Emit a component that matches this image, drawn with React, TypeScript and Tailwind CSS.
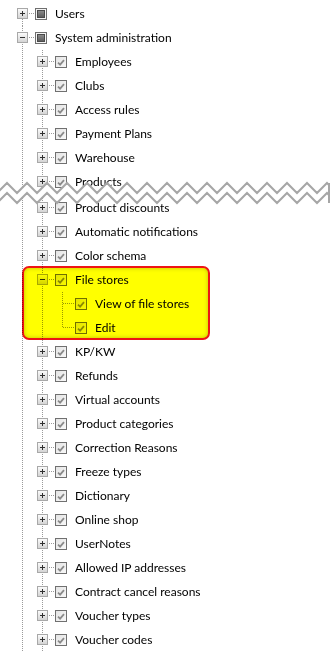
import React from 'react';

type Node = {
  label: string;
  depth: number;
  guides: boolean[];
  expander: 'plus' | 'minus' | null;
  mixed?: boolean;
  first?: boolean;
  last?: boolean;
};

const LINE = '#9a9a9a';

const level2 = [
  'Employees',
  'Clubs',
  'Access rules',
  'Payment Plans',
  'Warehouse',
  'Products',
  'Product discounts',
  'Automatic notifications',
  'Color schema',
  'File stores',
  'KP/KW',
  'Refunds',
  'Virtual accounts',
  'Product categories',
  'Correction Reasons',
  'Freeze types',
  'Dictionary',
  'Online shop',
  'UserNotes',
  'Allowed IP addresses',
  'Contract cancel reasons',
  'Voucher types',
  'Voucher codes',
];

const Guide = ({ on }: { on: boolean }) => (
  <svg width="20" height="24" className="shrink-0" shapeRendering="crispEdges">
    {on && <line x1="9.5" y1="0" x2="9.5" y2="24" stroke={LINE} strokeDasharray="1 1" />}
  </svg>
);

const Connector = ({ node }: { node: Node }) => (
  <svg width="22" height="24" className="shrink-0" shapeRendering="crispEdges">
    <defs>
      <linearGradient id="exp" x1="0" y1="0" x2="0" y2="1">
        <stop offset="0" stopColor="#fdfdfd" />
        <stop offset="1" stopColor="#d2d2d2" />
      </linearGradient>
    </defs>
    <line
      x1="9.5"
      y1={node.first ? 11 : 0}
      x2="9.5"
      y2={node.last ? 12 : 24}
      stroke={LINE}
      strokeDasharray="1 1"
    />
    <line x1="10" y1="11.5" x2="22" y2="11.5" stroke={LINE} strokeDasharray="1 1" />
    {node.expander && (
      <g>
        <rect x="4.5" y="6.5" width="10" height="10" fill="url(#exp)" stroke="#a8a8a8" />
        <rect x="7" y="11" width="5" height="1" fill="#303030" />
        {node.expander === 'plus' && <rect x="9" y="9" width="1" height="5" fill="#303030" />}
      </g>
    )}
  </svg>
);

const Check = ({ mixed }: { mixed?: boolean }) =>
  mixed ? (
    <div className="w-3 h-3 shrink-0 border border-[#6f6f6f] bg-[#f4f4f4] p-[1px]">
      <div className="w-full h-full border border-[#4a4a4a] bg-gradient-to-b from-[#8a8a8a] to-[#5e5e5e]" />
    </div>
  ) : (
    <div className="w-3 h-3 shrink-0 border border-[#707070] bg-gradient-to-br from-[#e4e4e4] to-[#f8f8f8] flex items-center justify-center">
      <svg width="8" height="7" viewBox="0 0 8 7">
        <path d="M1 3.6 L3.1 5.6 L7 1.2" fill="none" stroke="#8a8a8a" strokeWidth="1.8" />
      </svg>
    </div>
  );

const Row = ({ node }: { node: Node }) => (
  <div className="flex h-6 items-center pl-[13px]">
    {node.guides.map((g, i) => (
      <Guide key={i} on={g} />
    ))}
    <Connector node={node} />
    <Check mixed={node.mixed} />
    <span className="ml-2 whitespace-nowrap text-[12px] text-black">{node.label}</span>
  </div>
);

const Tear = () => {
  const pts: [number, number][] = [];
  for (let x = -13, i = 0; x <= 343; x += 10, i++) pts.push([x, i % 2 === 0 ? 13 : 23]);
  const top = pts.map(([x, y]) => `${x},${y}`).join(' ');
  const bottom = pts.map(([x, y]) => `${x},${y + 10}`).join(' ');
  const fill = `${top} ${pts
    .slice()
    .reverse()
    .map(([x, y]) => `${x},${y + 10}`)
    .join(' ')}`;
  return (
    <svg width="330" height="36" className="absolute left-0 top-0 z-10">
      <polygon points={fill} fill="#ffffff" />
      <polyline points={top} fill="none" stroke="#a6a6a6" strokeWidth="2" />
      <polyline points={bottom} fill="none" stroke="#a6a6a6" strokeWidth="2" />
      <line x1="329" y1="13" x2="329" y2="33" stroke="#a6a6a6" strokeWidth="2" />
    </svg>
  );
};

export default function App() {
  const child = (label: string): Node => ({
    label,
    depth: 2,
    guides: [true],
    expander: label === 'File stores' ? 'minus' : 'plus',
  });

  const before = level2.slice(0, level2.indexOf('Products'));
  const middle = level2.slice(level2.indexOf('Product discounts'), level2.indexOf('File stores'));
  const after = level2.slice(level2.indexOf('File stores') + 1);

  return (
    <div className="w-[330px] h-[654px] overflow-hidden bg-white pt-[2px] font-['Lato',sans-serif]">
      <Row node={{ label: 'Users', depth: 1, guides: [], expander: 'plus', mixed: true, first: true }} />
      <Row node={{ label: 'System administration', depth: 1, guides: [], expander: 'minus', mixed: true }} />
      {before.map((l) => (
        <Row key={l} node={child(l)} />
      ))}
      <div className="relative mb-[2px]">
        <Row node={child('Products')} />
        <Tear />
      </div>
      {middle.map((l) => (
        <Row key={l} node={child(l)} />
      ))}
      <div className="relative">
        <Row node={child('File stores')} />
        <Row node={{ label: 'View of file stores', depth: 3, guides: [true, true], expander: null }} />
        <Row node={{ label: 'Edit', depth: 3, guides: [true, true], expander: null, last: true }} />
        <div className="absolute left-[22px] top-[-2px] w-[188px] h-[74px] rounded-[7px] border-2 border-[#ee1515] bg-[#ffff00] mix-blend-multiply shadow-[inset_0_0_4px_rgba(110,110,0,0.45)]" />
      </div>
      {after.map((l) => (
        <Row key={l} node={child(l)} />
      ))}
    </div>
  );
}
